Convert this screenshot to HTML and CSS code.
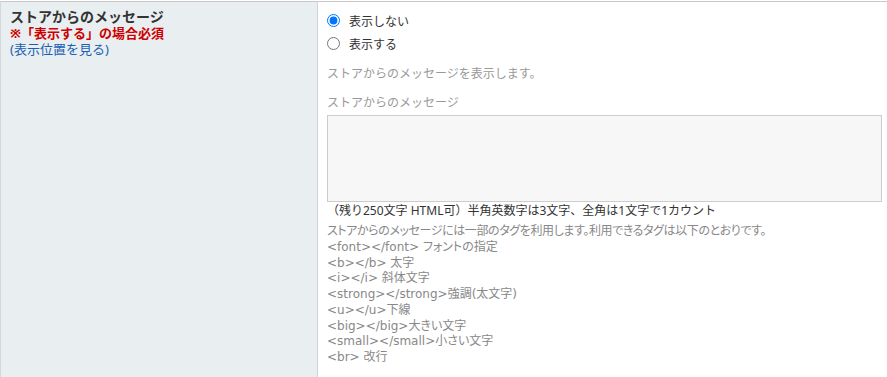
FILE: index.html
```html
<!DOCTYPE html>
<html lang="ja">
<head>
  <meta charset="UTF-8" />
  <meta name="viewport" content="width=device-width, initial-scale=1.0"/>
  <title>ストアからのメッセージ</title>
  <link rel="stylesheet" href="styles.css">
</head>
<body>
  <table class="form-table">
    <tr>
      <th class="label-cell">
        <div class="label-title">ストアからのメッセージ</div>
        <div class="label-required">※「表示する」の場合必須</div>
        <a href="#" class="label-link">(表示位置を見る)</a>
      </th>
      <td class="field-cell">
        <label class="radio-row"><input type="radio" name="msg" checked> 表示しない</label>
        <label class="radio-row"><input type="radio" name="msg"> 表示する</label>
        <p class="note">ストアからのメッセージを表示します。</p>
        <p class="field-name">ストアからのメッセージ</p>
        <textarea class="message-box"></textarea>
        <p class="counter">（残り250文字 HTML可）半角英数字は3文字、全角は1文字で1カウント</p>
        <div class="help">
          <span class="help-lead">ストアからのメッセージには一部のタグを利用します。利用できるタグは以下のとおりです。</span><br>
          &lt;font&gt;&lt;/font&gt; フォントの指定<br>
          &lt;b&gt;&lt;/b&gt; 太字<br>
          &lt;i&gt;&lt;/i&gt; 斜体文字<br>
          &lt;strong&gt;&lt;/strong&gt;強調(太文字)<br>
          &lt;u&gt;&lt;/u&gt;下線<br>
          &lt;big&gt;&lt;/big&gt;大きい文字<br>
          &lt;small&gt;&lt;/small&gt;小さい文字<br>
          &lt;br&gt; 改行
        </div>
      </td>
    </tr>
  </table>
</body>
</html>
```

FILE: styles.css
```css
body {
  margin: 0;
  padding-top: 1px;
  font-family: "Noto Sans", "Noto Sans CJK JP", sans-serif;
  font-feature-settings: "pkna";
  font-size: 12px;
  color: #333;
  background: #fff;
}

.form-table {
  width: 100%;
  border-collapse: collapse;
  border-top: 1px solid #c8c8c8;
}

.label-cell {
  width: 298px;
  background-color: #e9eef0;
  border-left: 1px solid #d4d8da;
  border-right: 1px solid #cfd3d5;
  padding: 7px 9px 0;
  text-align: left;
  vertical-align: top;
  font-weight: normal;
  height: 375px;
}

.label-title {
  font-size: 14px;
  font-weight: bold;
  line-height: 16px;
}

.label-required {
  color: #cc0000;
  font-size: 13px;
  font-weight: bold;
  line-height: 16px;
  font-feature-settings: normal;
}

.label-link {
  color: #1a5fb4;
  font-size: 13px;
  line-height: 16px;
  text-decoration: none;
}

.field-cell {
  vertical-align: top;
  padding: 7px 5px 0 9px;
}

.radio-row {
  display: flex;
  align-items: center;
  height: 23px;
}

.radio-row input {
  margin: 0 9px 0 0;
  width: 13px;
  height: 13px;
}

.note {
  margin: 11px 0 0;
  color: #999;
  line-height: 16px;
}

.field-name {
  margin: 13px 0 0;
  color: #999;
  line-height: 16px;
}

.message-box {
  display: block;
  box-sizing: border-box;
  width: 100%;
  height: 87px;
  margin-top: 4px;
  border: 1px solid #ccc;
  background: #f7f7f7;
  resize: none;
}

.counter {
  margin: 0;
  line-height: 17px;
}

.help {
  margin-top: 5px;
  color: #888;
  line-height: 15.75px;
  font-family: "DejaVu Sans", "Noto Sans CJK JP", sans-serif;
  font-feature-settings: "palt";
}

.help-lead {
  letter-spacing: -0.4px;
}
```
